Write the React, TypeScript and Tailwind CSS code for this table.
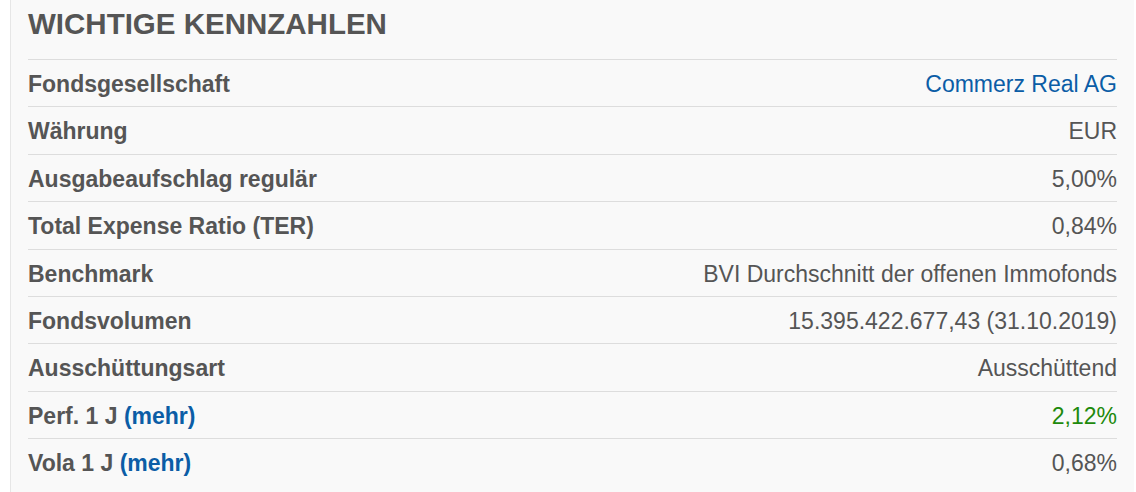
const rows: { label: string; more?: boolean; value: string; kind?: 'link' | 'up' }[] = [
  { label: 'Fondsgesellschaft', value: 'Commerz Real AG', kind: 'link' },
  { label: 'Währung', value: 'EUR' },
  { label: 'Ausgabeaufschlag regulär', value: '5,00%' },
  { label: 'Total Expense Ratio (TER)', value: '0,84%' },
  { label: 'Benchmark', value: 'BVI Durchschnitt der offenen Immofonds' },
  { label: 'Fondsvolumen', value: '15.395.422.677,43 (31.10.2019)' },
  { label: 'Ausschüttungsart', value: 'Ausschüttend' },
  { label: 'Perf. 1 J', more: true, value: '2,12%', kind: 'up' },
  { label: 'Vola 1 J', more: true, value: '0,68%' },
];

export default function App() {
  return (
    <div className="h-[492px] w-[1136px] overflow-hidden bg-white pl-[10px] font-['Liberation_Sans',Arial,sans-serif] text-[#555555]">
      <section className="h-full w-[1124px] border-l border-[#e6e6e6] bg-[#f9f9f9] px-[17px]">
        <h2 className="pt-[8px] text-[29.5px] leading-[32px] font-bold">WICHTIGE KENNZAHLEN</h2>
        <div className="mt-[19px]">
          {rows.map((r) => (
            <div
              key={r.label}
              className="flex items-center justify-between border-t border-[#dddddd] pt-[12px] pb-[10px] text-[23px] leading-[24.4px]"
            >
              <span className="font-bold">
                {r.label}
                {r.more && (
                  <>
                    {' '}
                    <a className="text-[#0b5da6]">(mehr)</a>
                  </>
                )}
              </span>
              <span
                className={
                  r.kind === 'link' ? 'text-[#0b5da6]' : r.kind === 'up' ? 'text-[#1e8a0c]' : ''
                }
              >
                {r.value}
              </span>
            </div>
          ))}
        </div>
      </section>
    </div>
  );
}
